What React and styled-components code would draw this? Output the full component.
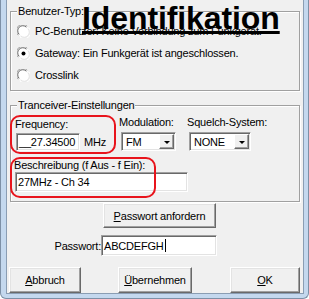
import React from 'react';
import styled, { createGlobalStyle } from 'styled-components';

const GlobalStyle = createGlobalStyle`
  html, body {
    margin: 0;
    padding: 0;
    background: #ffffff;
  }
  body {
    font-family: "Liberation Sans", Arial, sans-serif;
  }
`;

const Window = styled.div`
  box-sizing: border-box;
  width: 309px;
  height: 299px;
  display: flex;
  padding: 0 6px 4px 5px;
  background: #c4d8ee;
  border: 1px solid #7d90a6;
  border-top: none;
  border-radius: 0 0 6px 6px;
`;

const Content = styled.div`
  position: relative;
  flex: 1;
  display: flex;
  flex-direction: column;
  padding: 0 3px;
  background: #f0f0f0;
  border: 1px solid #8a9db3;
  border-top: none;
  font-size: 11px;
  letter-spacing: -0.2px;
  color: #000;
`;

const Title = styled.div`
  position: absolute;
  top: 1px;
  left: 75px;
  font-size: 32px;
  line-height: 34px;
  font-weight: bold;
  letter-spacing: -0.1px;
  text-decoration: underline;
  text-decoration-thickness: 3px;
  text-underline-offset: 2px;
  z-index: 2;
`;

const Group = styled.div`
  position: relative;
  box-sizing: border-box;
  flex-shrink: 0;
  height: ${(p) => p.$h}px;
  margin-top: ${(p) => p.$mt}px;
  padding: ${(p) => p.$pad};
  border: 1px solid #a0a0a0;
  box-shadow: inset 1px 1px 0 #ffffff, 1px 1px 0 #ffffff;
`;

const Legend = styled.span`
  position: absolute;
  top: -7px;
  left: 6px;
  padding: 0 1px;
  line-height: 13px;
  background: #f0f0f0;
`;

const RadioRow = styled.label`
  display: flex;
  align-items: center;
  height: 22px;
  white-space: nowrap;
`;

const RadioText = styled.span`
  margin-left: 5px;
`;

const Radio = ({ checked }) => (
  <svg width="13" height="13" viewBox="0 0 13 13">
    <circle cx="6.5" cy="6.5" r="6" fill="#ffffff" />
    <path d="M1.2 10.2 A6 6 0 0 1 10.2 1.2" fill="none" stroke="#a0a0a0" strokeWidth="1" />
    <path d="M2.2 9.4 A5 5 0 0 1 9.4 2.2" fill="none" stroke="#696969" strokeWidth="1" />
    <path d="M11.8 2.8 A6 6 0 0 1 2.8 11.8" fill="none" stroke="#ffffff" strokeWidth="1" />
    <path d="M10.8 3.6 A5 5 0 0 1 3.6 10.8" fill="none" stroke="#e3e3e3" strokeWidth="1" />
    {checked && <circle cx="6.5" cy="6.5" r="2" fill="#000000" />}
  </svg>
);

const Row = styled.div`
  display: flex;
  align-items: flex-start;
`;

const Marked = styled.div`
  position: relative;
  box-sizing: border-box;
  flex-shrink: 0;
  width: ${(p) => p.$w}px;
  height: ${(p) => p.$h}px;
  margin-left: -1px;
  margin-top: ${(p) => p.$mt || 0}px;
  padding: ${(p) => p.$pad};
  &::after {
    content: '';
    position: absolute;
    inset: 0;
    border: 2px solid #e8141c;
    border-radius: 10px;
    pointer-events: none;
    z-index: 1;
  }
`;

const Label = styled.div`
  line-height: 13px;
  white-space: nowrap;
`;

const Field = styled.div`
  display: flex;
  align-items: center;
  margin-top: ${(p) => p.$mt || 0}px;
`;

const TextBox = styled.div`
  box-sizing: border-box;
  flex-shrink: 0;
  display: flex;
  align-items: center;
  width: ${(p) => p.$w}px;
  height: ${(p) => p.$h}px;
  margin-left: ${(p) => p.$ml || 0}px;
  padding-left: 2px;
  background: #ffffff;
  border: 1px solid;
  border-color: #a0a0a0 #ffffff #ffffff #a0a0a0;
  box-shadow: inset 1px 1px 0 #696969, inset -1px -1px 0 #e3e3e3;
  white-space: nowrap;
`;

const Caret = styled.span`
  display: inline-block;
  width: 1px;
  height: 13px;
  margin-left: 1px;
  background: #000;
`;

const Unit = styled.span`
  margin-left: 4px;
`;

const Column = styled.div`
  flex-shrink: 0;
  width: ${(p) => p.$w}px;
  margin-left: ${(p) => p.$ml}px;
  padding-top: 1px;
`;

const Select = styled.div`
  box-sizing: border-box;
  display: flex;
  align-items: center;
  justify-content: space-between;
  width: ${(p) => p.$w}px;
  height: 19px;
  margin: 3px 0 0 2px;
  padding: 1px 1px 1px 4px;
  background: #ffffff;
  border: 1px solid;
  border-color: #a0a0a0 #ffffff #ffffff #a0a0a0;
  box-shadow: inset 1px 1px 0 #696969, inset -1px -1px 0 #e3e3e3;
`;

const DropButton = styled.span`
  box-sizing: border-box;
  display: flex;
  align-items: center;
  justify-content: center;
  width: 15px;
  height: 15px;
  background: #f0f0f0;
  border: 1px solid;
  border-color: #ffffff #696969 #696969 #ffffff;
  box-shadow: inset -1px -1px 0 #a0a0a0;
  &::before {
    content: '';
    border-left: 3px solid transparent;
    border-right: 3px solid transparent;
    border-top: 3px solid #000;
    margin-top: 1px;
  }
`;

const Button = styled.button`
  box-sizing: border-box;
  flex-shrink: 0;
  width: ${(p) => p.$w}px;
  height: ${(p) => p.$h}px;
  margin: ${(p) => p.$m};
  padding: 0;
  background: #f0f0f0;
  border: 1px solid;
  border-color: #ffffff #696969 #696969 #ffffff;
  box-shadow: inset -1px -1px 0 #a0a0a0, inset 1px 1px 0 #e3e3e3;
  font-family: "Liberation Sans", Arial, sans-serif;
  font-size: 11px;
  letter-spacing: -0.2px;
  color: #000;
`;

const PassRow = styled.div`
  display: flex;
  align-items: center;
  margin-top: 7px;
`;

const PassLabel = styled.span`
  width: 91px;
  text-align: right;
`;

const Footer = styled.div`
  display: flex;
  margin-top: 11px;
`;

export default function App() {
  return (
    <>
      <GlobalStyle />
      <Window>
        <Content>
          <Title>Identifikation</Title>

          <Group $h={80} $mt={11} $pad="8px 0 0 6px">
            <Legend>Benutzer-Typ:</Legend>
            <RadioRow>
              <Radio />
              <RadioText>PC-Benutzer: Keine Verbindung zum Funkgerät.</RadioText>
            </RadioRow>
            <RadioRow>
              <Radio checked />
              <RadioText>Gateway: Ein Funkgerät ist angeschlossen.</RadioText>
            </RadioRow>
            <RadioRow>
              <Radio />
              <RadioText>Crosslink</RadioText>
            </RadioRow>
          </Group>

          <Group $h={97} $mt={14} $pad="9px 0 0 0">
            <Legend>Tranceiver-Einstellungen</Legend>
            <Row>
              <Marked $w={106} $h={39} $pad="3px 0 0 5px">
                <Label>Frequency:</Label>
                <Field $mt={2}>
                  <TextBox $w={64} $h={18} $ml={1}>__27.34500</TextBox>
                  <Unit>MHz</Unit>
                </Field>
              </Marked>
              <Column $w={68} $ml={3}>
                <Label>Modulation:</Label>
                <Select $w={55}>
                  FM
                  <DropButton />
                </Select>
              </Column>
              <Column $w={70} $ml={0}>
                <Label>Squelch-System:</Label>
                <Select $w={62}>
                  NONE
                  <DropButton />
                </Select>
              </Column>
            </Row>
            <Marked $w={146} $h={41} $mt={3} $pad="2px 0 0 4px">
              <Label>Beschreibung (f Aus - f Ein):</Label>
              <TextBox $w={173} $h={20} $ml={1}>27MHz - Ch 34</TextBox>
            </Marked>
          </Group>

          <Button $w={113} $h={25} $m="1px 0 0 93px">
            <u>P</u>asswort anfordern
          </Button>

          <PassRow>
            <PassLabel>Passwort:</PassLabel>
            <TextBox $w={116} $h={21}>
              ABCDEFGH
              <Caret />
            </TextBox>
          </PassRow>

          <Footer>
            <Button $w={72} $h={26} $m="0 0 0 -1px">
              <u>A</u>bbruch
            </Button>
            <Button $w={74} $h={26} $m="0 0 0 37px">
              <u>Ü</u>bernehmen
            </Button>
            <Button $w={70} $h={26} $m="0 0 0 38px">
              <u>O</u>K
            </Button>
          </Footer>
        </Content>
      </Window>
    </>
  );
}
